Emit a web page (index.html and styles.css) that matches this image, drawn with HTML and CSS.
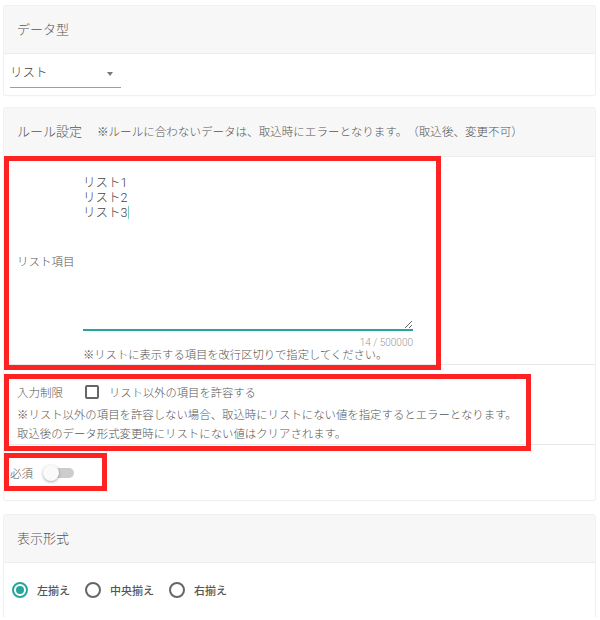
FILE: index.html
```html
<!DOCTYPE html>
<html lang="ja">
<head>
<meta charset="utf-8">
<title>設定</title>
<link rel="stylesheet" href="styles.css">
</head>
<body>
<section class="card card-type">
  <div class="card-head">データ型</div>
  <div class="card-body type-body">
    <div class="select">
      <span class="select-value">リスト</span>
      <span class="select-arrow"></span>
    </div>
  </div>
</section>

<section class="card card-rule">
  <div class="card-head head-rule">ルール設定<span class="head-note">※ルールに合わないデータは、取込時にエラーとなります。（取込後、変更不可）</span></div>
  <div class="row row-list">
    <div class="row-label">リスト項目</div>
    <div class="field">
      <div class="area-wrap">
        <textarea class="list-area" readonly>リスト1
リスト2
リスト3</textarea>
        <span class="caret"></span>
      </div>
      <div class="counter">14 / 500000</div>
      <div class="help">※リストに表示する項目を改行区切りで指定してください。</div>
    </div>
  </div>
  <div class="row row-limit">
    <div class="limit-line">
      <span class="limit-label">入力制限</span>
      <span class="checkbox"></span>
      <span class="check-label">リスト以外の項目を許容する</span>
    </div>
    <div class="limit-help">※リスト以外の項目を許容しない場合、取込時にリストにない値を指定するとエラーとなります。<br>取込後のデータ形式変更時にリストにない値はクリアされます。</div>
  </div>
  <div class="row row-required">
    <span class="req-label">必須</span>
    <span class="toggle"><span class="toggle-track"></span><span class="toggle-thumb"></span></span>
  </div>
  <div class="mark mark-1"></div>
  <div class="mark mark-2"></div>
  <div class="mark mark-3"></div>
</section>

<section class="card card-format">
  <div class="card-head">表示形式</div>
  <div class="card-body format-body">
    <span class="radio radio-on"></span><span class="radio-label">左揃え</span>
    <span class="radio"></span><span class="radio-label">中央揃え</span>
    <span class="radio"></span><span class="radio-label">右揃え</span>
  </div>
</section>
</body>
</html>
```

FILE: styles.css
```css
* { box-sizing: border-box; }
html, body { background: #fff; }
body {
  margin: 0;
  padding: 6px 5px 0 4px;
  font-family: Roboto, "Noto Sans CJK JP", sans-serif;
  font-weight: 300;
  color: #555;
  text-spacing-trim: space-all;
  font-feature-settings: "chws" 0;
}
.card {
  position: relative;
  background: #fff;
  border-radius: 2px;
  box-shadow: 0 0 0 1px #f1f1f1, 0 1px 2px rgba(0,0,0,0.06);
}
.card-type { margin-bottom: 13px; }
.card-rule { margin-bottom: 15px; }
.card-head {
  display: flex;
  align-items: center;
  height: 48px;
  padding: 0 13px 3px;
  background: #f7f7f7;
  border-bottom: 1px solid #ededed;
  font-size: 13px;
  color: #555;
}
.head-rule { height: 49px; }
.head-note {
  margin-left: 15px;
  font-size: 11.55px;
  color: #555;
}

/* card 1 */
.type-body { padding: 9px 6px 7px; }
.select {
  display: flex;
  justify-content: space-between;
  align-items: flex-start;
  width: 111px;
  height: 25px;
  border-bottom: 1px solid #9e9e9e;
}
.select-value { font-size: 12.5px; line-height: 20px; color: #444; }
.select-arrow {
  margin: 9px 8px 0 0;
  width: 0; height: 0;
  border-left: 3.5px solid transparent;
  border-right: 3.5px solid transparent;
  border-top: 4px solid #777;
}

/* rows */
.row { border-bottom: 1px solid #e9e9e9; }
.row-list {
  display: flex;
  height: 208px;
  padding-left: 13px;
}
.row-label {
  align-self: center;
  width: 66px;
  font-size: 11.5px;
  color: #555;
}
.field { width: 330px; padding-top: 18px; }
.area-wrap { position: relative; }
.list-area {
  display: block;
  width: 330px;
  height: 156px;
  margin: 0;
  padding: 0;
  border: none;
  border-bottom: 2px solid #26a69a;
  outline: none;
  resize: vertical;
  font-family: Roboto, "Noto Sans CJK JP", sans-serif;
  font-weight: 300;
  font-size: 12.5px;
  line-height: 15px;
  color: #444;
  background: transparent;
  text-spacing-trim: space-all;
}
.caret {
  position: absolute;
  left: 45px; top: 31px;
  width: 1px; height: 13px;
  background: #80cbc4;
}
.counter {
  margin-top: 6px;
  text-align: right;
  font-size: 10px;
  line-height: 12px;
  color: #999;
}
.help { font-size: 11.3px; line-height: 14px; color: #555; }

.row-limit {
  height: 80px;
  padding: 16px 13px 0;
}
.limit-line { display: flex; align-items: center; height: 22px; }
.limit-label { font-size: 11.5px; }
.checkbox {
  width: 14px; height: 14px;
  margin-left: 22px;
  border: 2px solid #666;
  border-radius: 2px;
}
.check-label { margin-left: 10px; font-size: 11.3px; }
.limit-help { margin-top: 3px; font-size: 11.4px; line-height: 19px; }

.row-required {
  display: flex;
  align-items: center;
  height: 55px;
  padding-left: 6px;
  border-bottom: none;
}
.req-label { font-size: 11.5px; }
.toggle {
  position: relative;
  width: 31px; height: 16px;
  margin-left: 10px;
}
.toggle-track {
  position: absolute;
  left: 3px; top: 3px;
  width: 28px; height: 10px;
  border-radius: 5px;
  background: #cdcdcd;
}
.toggle-thumb {
  position: absolute;
  left: 0; top: 0;
  width: 16px; height: 16px;
  border-radius: 50%;
  background: #fafafa;
  box-shadow: 0 1px 3px rgba(0,0,0,0.35);
}

/* annotation marks */
.mark { position: absolute; border: 5px solid #ff2222; pointer-events: none; }
.mark-1 { left: 0; top: 48px; width: 437px; height: 214px; }
.mark-2 { left: 0; top: 266px; width: 527px; height: 77px; }
.mark-3 { left: 0; top: 345px; width: 103px; height: 38px; }

/* card 3 */
.format-body {
  display: flex;
  align-items: center;
  height: 54px;
  padding-left: 8px;
}
.radio {
  display: flex;
  align-items: center;
  justify-content: center;
  width: 16px; height: 16px;
  margin-left: 15px;
  border: 2px solid #666;
  border-radius: 50%;
}
.radio:first-child { margin-left: 0; }
.radio-on { border-color: #26a69a; }
.radio-on::after {
  content: "";
  width: 8px; height: 8px;
  border-radius: 50%;
  background: #26a69a;
}
.radio-label { margin-left: 9px; font-size: 11px; font-weight: 500; color: #555; }
```
